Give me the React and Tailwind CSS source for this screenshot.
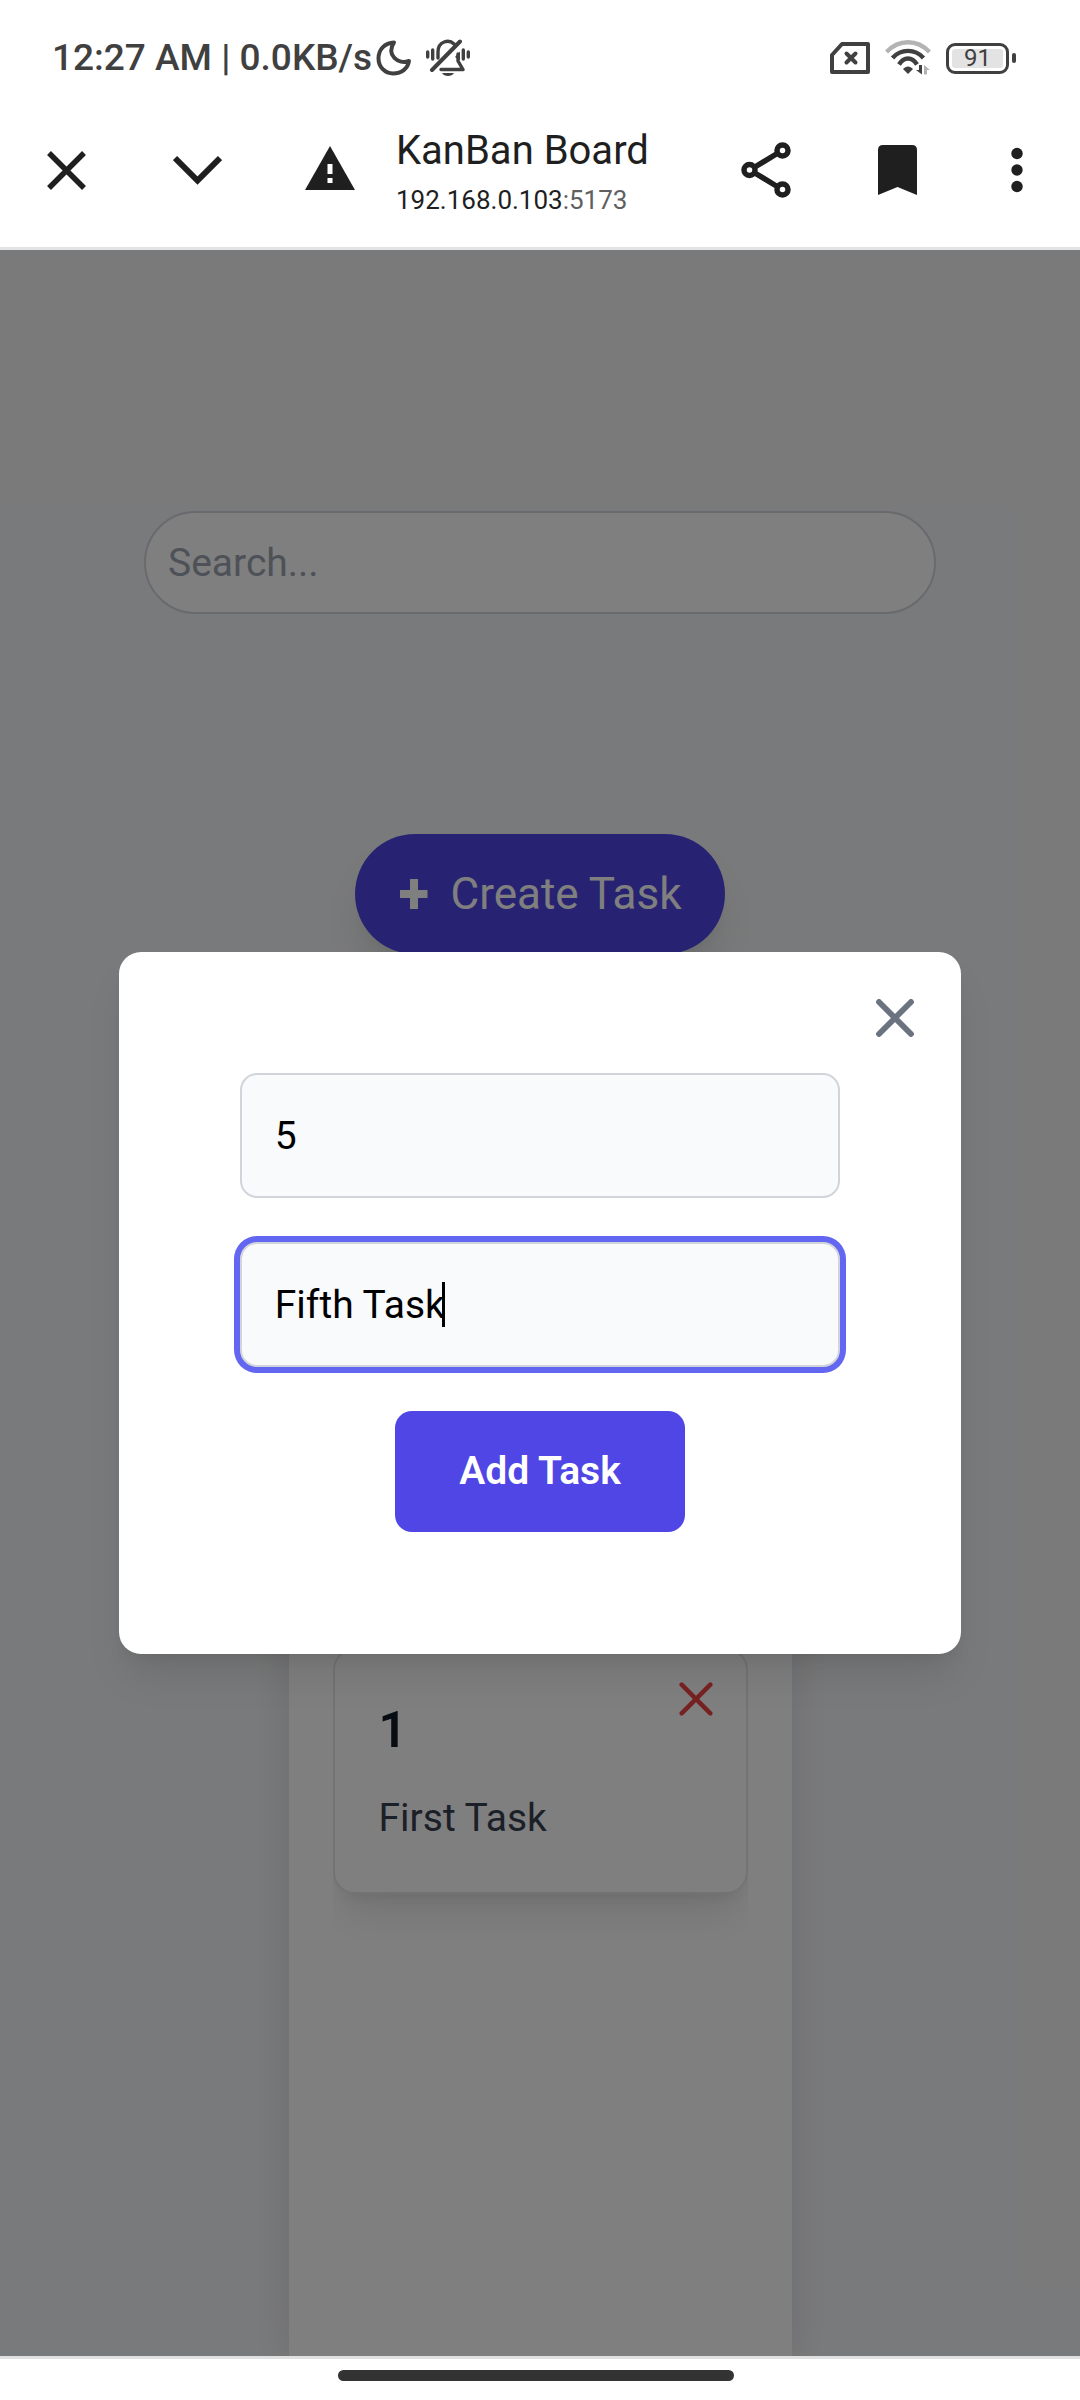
const ink = "text-[#1f1f1f]";

function StatusBar() {
  return (
    <div className="flex h-[116px] items-center justify-between pr-[64px] pl-[52px] text-[#404040]">
      <div className="flex items-center">
        <span className="text-[37px] leading-[44px] font-medium whitespace-nowrap">12:27 AM | 0.0KB/s</span>
        <svg className="ml-1 h-9 w-9" viewBox="0 0 36 36" fill="none" stroke="currentColor" strokeWidth="4" strokeLinejoin="round">
          <path d="M18 2.500C9 3 2.500 9 2.500 18.500C2.500 27 9 33.500 17 33.500C26 33.500 32 28 33 21C22 25 10 15 18 2.500Z" />
        </svg>
        <svg className="ml-[14px] h-[38px] w-[44px]" viewBox="0 0 44 38" fill="none" stroke="currentColor" strokeWidth="3.400" strokeLinecap="round">
          <path d="M1.700 13v5M6.700 11v9M42.300 13v5M37.300 11v9" />
          <path d="M6 31L34 2.500" strokeWidth="4" />
          <path d="M12 19v-6c0-11 11-13 16-8M32 15v7l5 8.500H15" strokeLinejoin="round" />
          <path d="M29 18l5-5.500v9z" fill="currentColor" stroke="none" />
          <path d="M16 34h12c-2 4-10 4-12 0z" fill="currentColor" stroke="none" />
        </svg>
      </div>
      <div className="flex items-center">
        <svg className="h-8 w-10" viewBox="0 0 40 32" fill="none" stroke="currentColor" strokeWidth="4" strokeLinejoin="round" strokeLinecap="round">
          <path d="M12 2H38V30H2V13Z" />
          <path d="M16.500 11.500l9 9M25.500 11.500l-9 9" />
        </svg>
        <svg className="ml-[15px] h-9 w-[46px]" viewBox="0 0 46 36" fill="none" strokeWidth="4.400" stroke="currentColor">
          <path d="M1.500 12C14-1 32-1 44.500 12" stroke="#b3b3b3" />
          <path d="M7.500 18C16 8.500 30 8.500 38.500 18M14 24.500C19 16.500 27 16.500 32 24.500" />
          <path d="M18 29c3-3.500 7-3.500 10 0l-5 5z" fill="currentColor" stroke="none" />
          <path d="M37 25v9.500L31 30h3v-5z" fill="currentColor" stroke="none" />
          <path d="M39 34.500V25l6 5h-3v4.500z" fill="#b3b3b3" stroke="none" />
        </svg>
        <span className="ml-[15px] flex items-center gap-[3px]">
          <span className="flex h-[31px] w-[63px] items-center justify-center rounded-[9px] border-3 border-current p-[3px]">
            <span className="flex h-full w-full items-center justify-center rounded-[3px] bg-[#e3e3e3] text-[24px] leading-[24px]">91</span>
          </span>
          <span className="h-[10px] w-1 rounded-full bg-current" />
        </span>
      </div>
    </div>
  );
}

function BrowserBar() {
  return (
    <header className={`flex h-[134px] items-start border-b-3 border-[#e3e3e3] pt-[3px] ${ink}`}>
      <div className="flex h-[102px] items-center pl-[47px]">
        <button aria-label="Close tab">
          <svg className="h-[39px] w-[39px]" viewBox="0 0 39 39" stroke="currentColor" strokeWidth="5.500">
            <path d="M2 2l35 35M37 2L2 37" />
          </svg>
        </button>
        <button aria-label="Minimize" className="ml-[87px]">
          <svg className="h-[30px] w-[49px]" viewBox="0 0 49 30" fill="none" stroke="currentColor" strokeWidth="6">
            <path d="M2 3l22.500 22.500L47 3" />
          </svg>
        </button>
        <button aria-label="Connection not secure" className="ml-[83px]">
          <svg className="h-[48px] w-[50px]" viewBox="0 0 50 48">
            <path d="M25 0L50 44H0z" fill="currentColor" />
            <path d="M22.500 18h5v10h-5zM22.500 32h5v5h-5z" fill="#fff" />
          </svg>
        </button>
      </div>
      <div className="ml-[41px] min-w-0 flex-1 pt-2">
        <h1 className="truncate text-[40px] leading-[48px]">KanBan Board</h1>
        <p className="truncate text-[26px] leading-[50px]">
          192.168.0.103<span className="text-[#5f5f5f]">:5173</span>
        </p>
      </div>
      <div className="flex h-[102px] items-center pr-[57px]">
        <button aria-label="Share">
          <svg className="h-[56px] w-[50px]" viewBox="0 0 50 56" fill="none" stroke="currentColor" strokeWidth="5.500">
            <circle cx="8.500" cy="28" r="5.500" />
            <circle cx="41.500" cy="8.500" r="5.500" />
            <circle cx="41.500" cy="47.500" r="5.500" />
            <path d="M13 25.500L37 11M13 30.500L37 45" />
          </svg>
        </button>
        <button aria-label="Bookmark" className="ml-[87px]">
          <svg className="h-[50px] w-[39px]" viewBox="0 0 39 50" fill="currentColor">
            <path d="M5 0H34Q39 0 39 5V50L19.500 42L0 50V5Q0 0 5 0z" />
          </svg>
        </button>
        <button aria-label="Menu" className="ml-[94px]">
          <svg className="h-[46px] w-3" viewBox="0 0 12 46" fill="currentColor">
            <circle cx="6" cy="6.500" r="5.700" />
            <circle cx="6" cy="23" r="5.700" />
            <circle cx="6" cy="39.500" r="5.700" />
          </svg>
        </button>
      </div>
    </header>
  );
}

function Cross({ className, width }) {
  return (
    <svg className={className} viewBox="0 0 38 38" stroke="currentColor" strokeWidth={width} strokeLinecap="round">
      <path d="M3 3l32 32M35 3L3 35" />
    </svg>
  );
}

function TaskCard({ title, text }) {
  return (
    <article className="flex flex-col rounded-[22px] border-2 border-gray-200 bg-white px-11 pt-10 pb-11 shadow-[0_27px_41px_-8px_rgba(0,0,0,0.1),0_11px_17px_-11px_rgba(0,0,0,0.1)]">
      <div className="flex items-start justify-between">
        <h2 className="pt-1 text-[50px] leading-[72px] font-semibold text-[#111827]">{title}</h2>
        <button aria-label="Delete task" className="-mt-2 -mr-[11px] text-[#ef4444]">
          <Cross className="h-[34px] w-[34px]" width={5} />
        </button>
      </div>
      <p className="mt-[22px] text-[39px] leading-[60px] text-[#374151]">{text}</p>
    </article>
  );
}

function Board() {
  return (
    <div className="flex flex-1 flex-col items-center bg-[#f3f4f6] pt-[261px]">
      <input
        type="search"
        aria-label="Search"
        placeholder="Search..."
        className="h-[103px] w-11/15 rounded-full border-2 border-[#d1d5db] bg-white px-[22px] text-[39px] placeholder:text-[#9ca3af]"
      />
      <button className="mt-[220px] flex h-[120px] items-center gap-[22px] rounded-full bg-[#4f46e5] px-11 text-[44px] text-white shadow-[0_27px_41px_-8px_rgba(0,0,0,0.1),0_11px_17px_-11px_rgba(0,0,0,0.1)]">
        <svg className="h-[30px] w-[30px]" viewBox="0 0 30 30" fill="currentColor">
          <path d="M11 0h8v11h9.500v8H19v11h-8V19H1v-8h10z" />
        </svg>
        Create Task
      </button>
      <section className="mt-[132px] flex w-[503px] flex-1 flex-col bg-white px-11 pt-[562px] shadow-[0_27px_41px_-8px_rgba(31,41,55,0.08),0_0_41px_-4px_rgba(31,41,55,0.08)]">
        <div className="flex-1 overflow-hidden">
          <TaskCard title="1" text="First Task" />
        </div>
      </section>
    </div>
  );
}

const field = "h-[125px] w-full rounded-[17px] border-2 border-[#d1d5db] bg-[#f9fafb] px-[33px] text-[39px] text-black outline-none";

function TaskDialog() {
  return (
    <div className="absolute inset-0 flex items-center justify-center bg-black/50">
      <form
        role="dialog"
        aria-label="New task"
        className="relative flex w-[78%] flex-col items-center gap-11 rounded-[22px] bg-white p-[121px] pb-[122px] shadow-[0_27px_41px_-8px_rgba(0,0,0,0.1),0_11px_17px_-11px_rgba(0,0,0,0.1)]"
      >
        <button type="button" aria-label="Close" className="absolute top-[47px] right-[47px] text-[#6b7280]">
          <Cross className="h-[38px] w-[38px]" width={5.8} />
        </button>
        <input aria-label="Task title" defaultValue="5" className={field} />
        <div className="relative w-full">
          <input aria-label="Task description" defaultValue="Fifth Task" className={`${field} block ring-6 ring-[#6366f1]`} />
          <span className="absolute top-10 left-[202px] h-[45px] w-[3px] bg-black" />
        </div>
        <button type="button" className="h-[121px] rounded-[17px] bg-[#4f46e5] px-16 text-[39px] font-semibold text-white">
          Add Task
        </button>
      </form>
    </div>
  );
}

export default function App() {
  return (
    <div className="flex min-h-screen flex-col bg-white font-[Roboto,sans-serif]">
      <StatusBar />
      <BrowserBar />
      <main className="relative flex flex-1 flex-col overflow-hidden">
        <Board />
        <TaskDialog />
      </main>
      <footer className="flex h-11 justify-center border-t-3 border-[#e0e0e0] pt-[11px] pr-2">
        <span className="h-[11px] w-[37%] rounded-full bg-[#333333]" />
      </footer>
    </div>
  );
}
